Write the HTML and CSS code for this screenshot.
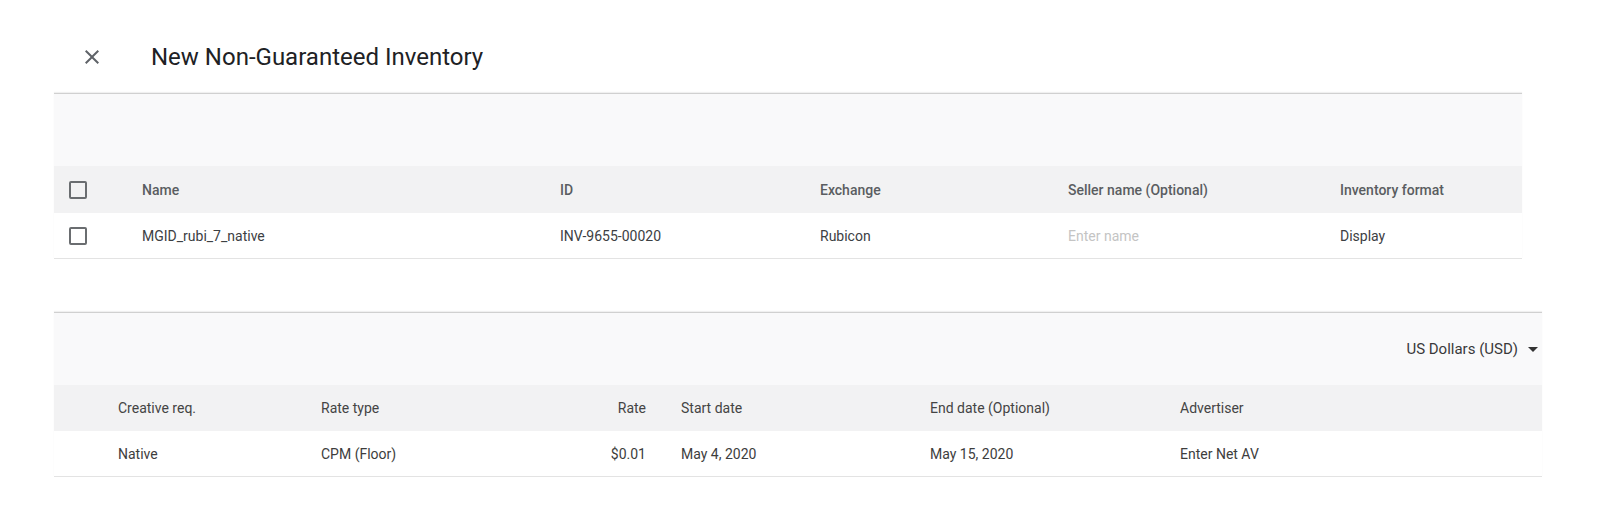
FILE: index.html
```html
<!DOCTYPE html>
<html>
<head>
<meta charset="utf-8">
<link rel="stylesheet" href="styles.css">
</head>
<body>
<div class="page">
  <header class="topbar">
    <span class="close" aria-label="Close">
      <svg width="24" height="24" viewBox="0 0 24 24"><path d="M19 6.41 17.59 5 12 10.59 6.41 5 5 6.41 10.59 12 5 17.59 6.41 19 12 13.41 17.59 19 19 17.59 13.41 12z" fill="#5f6368"/></svg>
    </span>
    <h1 class="title">New Non-Guaranteed Inventory</h1>
  </header>

  <section class="card card-inv">
    <div class="toolbar"></div>
    <div class="row head inv-grid">
      <div class="cell cb-cell"><span class="checkbox"></span></div>
      <div class="cell">Name</div>
      <div class="cell">ID</div>
      <div class="cell">Exchange</div>
      <div class="cell">Seller name (Optional)</div>
      <div class="cell">Inventory format</div>
    </div>
    <div class="row data inv-grid">
      <div class="cell cb-cell"><span class="checkbox"></span></div>
      <div class="cell">MGID_rubi_7_native</div>
      <div class="cell">INV-9655-00020</div>
      <div class="cell">Rubicon</div>
      <div class="cell placeholder">Enter name</div>
      <div class="cell">Display</div>
    </div>
  </section>

  <section class="card card-rate">
    <div class="toolbar toolbar-right">
      <span class="currency">US Dollars (USD)</span>
      <span class="caret"></span>
    </div>
    <div class="row head rate-grid dark">
      <div class="cell"></div>
      <div class="cell">Creative req.</div>
      <div class="cell">Rate type</div>
      <div class="cell right">Rate</div>
      <div class="cell start">Start date</div>
      <div class="cell">End date (Optional)</div>
      <div class="cell">Advertiser</div>
    </div>
    <div class="row data rate-grid dark">
      <div class="cell"></div>
      <div class="cell">Native</div>
      <div class="cell">CPM (Floor)</div>
      <div class="cell right">$0.01</div>
      <div class="cell start">May 4, 2020</div>
      <div class="cell">May 15, 2020</div>
      <div class="cell">Enter Net AV</div>
    </div>
  </section>
</div>
</body>
</html>
```

FILE: styles.css
```css
html, body {
  margin: 0;
  padding: 0;
  background: #ffffff;
}

body {
  font-family: Roboto, "Liberation Sans", Arial, sans-serif;
  color: #3c4043;
}

.page {
  padding-left: 54px;
  width: 1546px;
}

.topbar {
  height: 93px;
  display: flex;
  align-items: center;
  box-sizing: border-box;
  padding-top: 20px;
}

.close {
  width: 24px;
  height: 24px;
  margin-left: 26px;
  display: flex;
}

.title {
  margin: 0 0 0 47px;
  font-size: 24px;
  font-weight: 400;
  color: #202124;
}

.card {
  border-top: 1px solid #d0d0d0;
  box-shadow: 0 -1px 1px rgba(0, 0, 0, 0.06);
}

.card-inv {
  width: 1468px;
}

.card-rate {
  width: 1488px;
  margin-top: 53px;
}

.toolbar {
  height: 72px;
  background: #f9f9fa;
}

.toolbar-right {
  display: flex;
  align-items: center;
  justify-content: flex-end;
  padding-right: 2px;
}

.currency {
  font-size: 15px;
  color: #3a3a3a;
}

.caret {
  width: 0;
  height: 0;
  border-left: 5px solid transparent;
  border-right: 5px solid transparent;
  border-top: 5px solid #333;
  margin-left: 10px;
  margin-right: 2px;
}

.row {
  display: grid;
  align-items: center;
  font-size: 14px;
}

.row.head {
  height: 47px;
  background: #f2f2f3;
  color: #5a5d61;
  font-weight: 500;
}

.row.data {
  height: 45px;
  background: #ffffff;
  border-bottom: 1px solid #e3e3e3;
}

.inv-grid {
  grid-template-columns: 88px 418px 260px 248px 272px 1fr;
}

.rate-grid {
  grid-template-columns: 64px 203px 245px 80px 284px 250px 1fr;
}

.rate-grid.head {
  height: 46px;
}

.dark {
  color: #3d3d3d;
}

.dark.head {
  color: #444;
  font-weight: 400;
}

.cell {
  white-space: nowrap;
}

.cell.right {
  text-align: right;
}

.cell.start {
  padding-left: 35px;
}

.cb-cell {
  display: flex;
  padding-left: 15px;
}

.checkbox {
  width: 14px;
  height: 14px;
  border: 2px solid #6a6d70;
  border-radius: 2px;
}

.placeholder {
  color: #c4c4c4;
}
```
